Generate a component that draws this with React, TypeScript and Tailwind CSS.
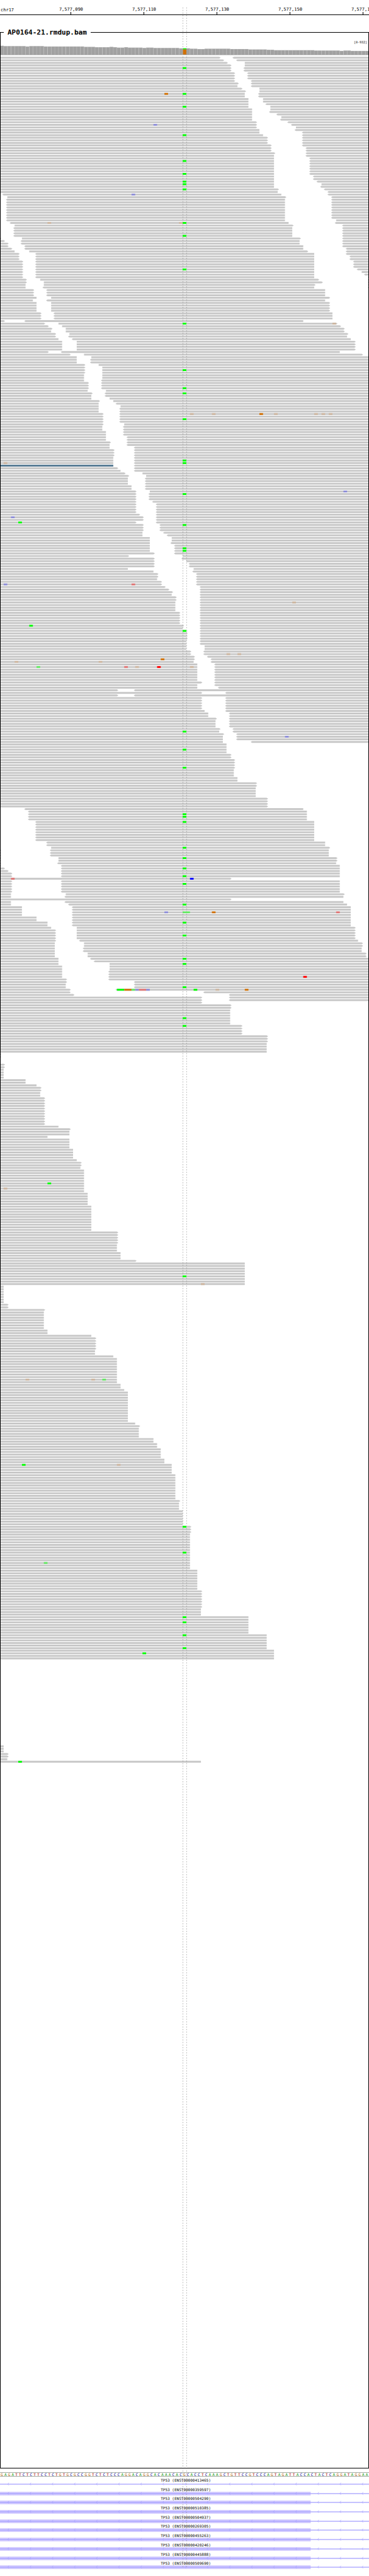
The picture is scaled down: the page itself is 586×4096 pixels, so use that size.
import React from "react";

const BASES = 101;
const BASE_W = 1000 / BASES;
const ROW_TOP = 154;
const ROW_PITCH = 7;
const ROW_H = 5;
const LOCUS = 50;
const LAST_ROW = 661;

// Each entry is "first row: reads". A read is start-end in bases, and > or < marks
// an end that carries the strand arrow. The reads hold until the next entry.
const LAYOUT = `
0: -60> <64-;1: -61> <65-;2: -62> 67-;3: -63> 67-;4: -63> <67-;6: -64> <68-;9: -64> <69-;10: -65> <69-;11: -65 <69-;
12: -66> 71-;13: -67> 71-;14: -67 <71-;16: -68 72-;18: -68 <73-;19: -68 74-;20: -69 74-;21: -69 <74-;22: -69 <76-;
23: -69 77-;24: -69 <77-;25: -70> <79-;26: -70> <80-;27: -70> 81-;28: -71 <81-;29: -71 <83-;30: -72 <83-;31: -73> <83-;
34: -74> <83-;35: -74> <84-;37: -75> <84-;38: -75 <84-;39: -75 <85-;46: -75 <86-;48: -75 <87-;49: -75 88-;50: -75 <88-;
51: -76> <89-;52: -76 <90-;53: <1-77 <90-;54: 2-78> <91-;55: <2-78 <91-;63: <2-78 92-;64: <3-79 <92-;65: 4-80> <94-;
66: <4-80 <94-;70: -0> 6-82> <94-;71: -1> <6-82 <94-;72: -2> <6-82 <94-;73: -2> <7-83 <94-;74: -3> <7-83 <95-;
75: -4 8-84> <95-;76: -5> <10-86 <95-;77: -5> <10-86 <96-;79: -6> <10-86 <97-;82: -6> <10-86 <98-;83: -6> <10-86 99-;
84: -6> <10-86 <100-;85: -6> <10-86 <101-;86: -7> 11-87> <101-;87: -7> 12-88> <101-;88: -7 12-86> <101-;
89: -7 <12-86 <101-;90: -9> <13-89;93: -10 14-90>;94: -9 <13-89;95: -10 14-90>;99: -11> <15-91;102: -1> <7-83;
103: -12> 16-92>;104: -13> 17-93>;105: -14> 18-94>;106: -14 18-94>;107: -15> 19-95>;108: -15> <19-95;109: -16 <20-96;
110: -17 21-97>;114: -13> <17-93;115: -19> 23-99>;116: -21 25-;117: -21 <25-;119: -23> 27-;120: -23> 28-;123: -23 28-;
125: -23 <28-;126: -24> <28-;129: -24 29-;130: -25> <29-;131: -25 <29-;132: -25 30-;133: -27> 31-;134: -27 <32-;
135: -27 33-;136: -27 <33-;138: -28> <33-;142: -28> 34-;143: -28 <34-;145: -29 <34-;147: -29 <35-;149: -30> <35-;
150: -30 <35-;151: -30 <37-;152: -31> <37-;155: -31 <37-;159: -32> <37-;160: -33 <37-;161: -34> 39-;162: -35> 40-;
163: -35 <40-;166: -36 <40-;168: -37> 41-;169: -37> <41-;172: -37> <42-;173: -37> <43-;177: -38> <43-;178: -39> <43-;
180: -37> <43-;181: -39> <44-;184: -39 <45-;185: -39 <46-;186: -41 47-;188: -41 <47-;189: -41 <48-;192: -42> <48-;
193: -35> 50-;194: -42> <50-;195: -42> 51-;196: -42> <52-;198: -35 53-;199: -42 <53-;200: -43> <54-;202: -43 <54-;
203: -44> <54-;205: -45> <55-;206: -46> <55-;207: -47> <55-;208: -47 <55-;209: -48> <55-;211: -48 <55-;215: -49> <55-;
220: -50> <55-;221: -50 <55-;222: -51> <55-;226: -51 <55-;228: -51 56-;230: -52> <56-;232: -53> <57-;233: -53> <58-;
234: -53 <58-;235: -54 <59-;242: -55> <59-;243: -54 <59-;244: -54 <60-;245: -32> <37-;246: -55> <62-;247: -32> <37-;
248: -55> <62-;253: -56 <62-;254: -57 <63-;256: -59> <63-;257: -59 <63-;260: -60> <64-;261: -60 <64-;262: -61> <65-;
263: -61 <65-;265: -61 <69-;266: -62;270: -63>;272: -64>;276: -64;279: -65;281: -70>;283: -70;287: -73>;291: <7-83;
292: <8-84;296: <10-86;304: <13-89;306: 14-90>;307: -0> <14-90;310: -0> 16-92>;312: -0> <16-92;313: -0> <17-93;
314: -1> <17-93;315: -2> <17-93;316: -3> <17-93;318: -63>;319: -3> <17-93;324: -3 18-94>;325: -3 <18-94;326: -63>;
327: -3 <18-94;328: -3 <19-95;329: -6 <20-96;333: -10 <20-96;335: -13 <20-96;337: -14 21-97>;338: -15> 21-97>;
342: -15> <22-98;343: -15 23-99>;345: -15 <23-99;347: -15 24-100>;349: -16 <25-;350: -16 <26-;351: -16 30-;
352: -17 30-;354: -17 <30-;357: -18> <30-;358: -18> <37-;359: -18 <37-;361: -19> <32-;362: -19> <56-;363: -20> <63-;
364: -55> <63-;366: -55>;367: -63>;369: -63;375: -66>;379: -73>;382: -73;386: -0>;388:;390: -1>;392: -1;396: -7;
398: -10;399: -11>;401: -11;403: -12>;414: -16;415: -19>;416: -19;418: -13;419: -19;423: -20;427: -21;428: -22>;
430: -22;431: -23;440: -24;445: -25;455: -32>;460: -32;463: -33;466: -37>;467: -67;476: -1;483: -2>;485: -12>;
486: -12;493: -13;495: -25;496: -26>;501: -26;503: -31;504: -32;514: -33;516: -34;517: -35;529: -37;530: -38>;
531: -38;535: -42;537: -43;539: -44;543: -45;545: -47;549: -48;559: -49>;560: -49;563: -50;569: -52>;572: -52;
586: -54;594: -55>;601: -55;604: -68;611: -73;617: -75;621:;654: -1;657: -2>;659: -2;660: -55;661:`;

const LOCUS_ROWS = [
  4, 14, 19, 30, 40, 45, 48, 49, 51, 64, 69, 82, 103, 121, 128, 130, 140, 156, 157, 169, 181, 190, 191, 222, 261, 268,
  275, 293, 294, 296, 306, 310, 314, 317, 320, 328, 335, 340, 349, 351, 360, 372, 375, 472, 569, 579, 604, 606, 611, 616,
];

const GREEN = "#00ff00";
const ORANGE = "#d17105";
const BLUE = "#0000ff";
const RED = "#ff0000";
const PALE_GREEN = "#64e864";
const PALE_BLUE = "#8f8fd9";
const PALE_RED = "#e07676";
const TAN = "#cdb6a0";
const STEEL = "#577b94";

type Mark = [row: number, base: number, color: string, length?: number];

const MARKS: Mark[] = [
  ...LOCUS_ROWS.map((row): Mark => [row, LOCUS, GREEN]),
  [14, 45, ORANGE], [26, 42, PALE_BLUE], [53, 36, PALE_BLUE], [64, 13, TAN], [64, 49, TAN], [103, 91, TAN],
  [138, 52, TAN], [138, 58, TAN], [138, 71, ORANGE], [138, 75, TAN], [138, 86, TAN], [138, 88, TAN], [138, 90, TAN],
  [157, 1, TAN], [158, 0, STEEL, 31], [168, 94, PALE_BLUE], [178, 3, PALE_BLUE], [180, 5, GREEN],
  [204, 1, PALE_BLUE], [204, 36, PALE_RED], [211, 80, TAN], [220, 8, GREEN], [231, 62, TAN], [231, 65, TAN],
  [233, 44, ORANGE], [234, 4, TAN], [234, 27, TAN], [236, 10, PALE_GREEN], [236, 34, PALE_RED], [236, 37, TAN],
  [236, 43, RED], [236, 52, TAN], [263, 78, PALE_BLUE], [318, 3, PALE_RED], [318, 52, BLUE], [331, 45, PALE_BLUE],
  [331, 50, PALE_GREEN, 2], [331, 58, ORANGE], [331, 92, PALE_RED], [356, 83, RED], [361, 32, GREEN, 2],
  [361, 34, ORANGE, 2], [361, 36, PALE_GREEN], [361, 37, PALE_BLUE], [361, 38, PALE_RED, 2], [361, 40, PALE_BLUE],
  [361, 53, GREEN], [361, 59, TAN], [361, 67, ORANGE], [436, 13, GREEN], [438, 1, TAN], [475, 55, TAN],
  [512, 7, TAN], [512, 25, TAN], [512, 28, PALE_GREEN], [545, 6, GREEN], [545, 32, TAN], [583, 12, PALE_GREEN],
  [618, 39, GREEN], [660, 5, GREEN],
];

// [first base, top of the bar]
const COVERAGE: [number, number][] = [
  [0, 124], [1, 125], [7, 126], [8, 125], [12, 126], [23, 127], [26, 128], [30, 127], [31, 128], [32, 129], [34, 128],
  [35, 129], [39, 130], [40, 129], [42, 130], [49, 131], [52, 132], [54, 133], [56, 132], [63, 133], [68, 134],
  [73, 135], [75, 136], [86, 137], [93, 138], [94, 137], [96, 138],
];

const SEQUENCE =
  "GAGATTCTCTTCCTCTGTGCGCCGGTCTCTCCCAGGACAGGCACAAACACGCACCTCAAAGCTGTTCCGTCCCAGTAGATTACCACTACTCAGGATAGGAA";

const BASE_COLOR: Record<string, string> = {
  A: "text-[#009600]",
  C: "text-[#000096]",
  G: "text-[#b86a10]",
  T: "text-[#b00000]",
};

const TICKS = ["7,577,090", "7,577,110", "7,577,130", "7,577,150", "7,577,170"];

const TRANSCRIPTS = [
  "ENST00000413465", "ENST00000359597", "ENST00000504290", "ENST00000510385", "ENST00000504937",
  "ENST00000269305", "ENST00000455263", "ENST00000420246", "ENST00000445888", "ENST00000509690",
];

const READS_PATH = (() => {
  const groups = LAYOUT.trim().split(";").map((entry) => {
    const [row, reads] = entry.split(":");
    return { row: Number(row), reads: reads.trim().split(" ").filter(Boolean) };
  });
  const parts: string[] = [];
  groups.forEach((group, i) => {
    const end = i + 1 < groups.length ? groups[i + 1].row : LAST_ROW;
    for (let row = group.row; row < end; row++) {
      const y = ROW_TOP + row * ROW_PITCH;
      for (const read of group.reads) {
        const m = /^(<?)(\d*)-(\d*)(>?)$/.exec(read);
        if (!m) continue;
        const x0 = (m[2] === "" ? 0 : Number(m[2])) * BASE_W;
        const x1 = (m[3] === "" ? BASES : Number(m[3])) * BASE_W;
        const left = m[1] ? `L${x0 - 4} ${y + 2.5}` : "";
        const right = m[4] ? `L${x1 + 4} ${y + 2.5}` : "";
        parts.push(`M${x0} ${y}H${x1}${right}L${x1} ${y + ROW_H}H${x0}${left}Z`);
      }
    }
  });
  return parts.join("");
})();

const GUIDES_PATH = (() => {
  const covered = new Set([...LOCUS_ROWS, 331]);
  const parts: string[] = [];
  for (let y = 20, row = -19; y < 6960; y += ROW_PITCH, row++) {
    if (y > 129 && y < 148) {
      parts.push(`M504.8 ${y}h1v3h-1Z`);
      continue;
    }
    const h = covered.has(row) ? 1 : 3;
    parts.push(`M495 ${y}h1v${h}h-1ZM505 ${y}h1v${h}h-1Z`);
  }
  return parts.join("");
})();

function coverageTop(base: number) {
  let top = COVERAGE[0][1];
  for (const [first, value] of COVERAGE) if (first <= base) top = value;
  return top;
}

function Ruler() {
  return (
    <header className="flex overflow-hidden border-b border-black pt-[13px] text-[7px] leading-[7px]">
      <div className="w-[9.36%] shrink-0 whitespace-nowrap pl-px">chr17</div>
      {TICKS.map((tick) => (
        <div key={tick} className="flex w-[19.8%] shrink-0 flex-col items-center">
          <span className="-mt-px">{tick}</span>
          <span className="h-1 w-px bg-black" />
        </div>
      ))}
    </header>
  );
}

function Coverage() {
  return (
    <g>
      {Array.from({ length: BASES }, (_, base) => {
        const top = coverageTop(base);
        const x = base * BASE_W;
        return (
          <g key={base}>
            <rect x={x} y={top} width={BASE_W + 0.1} height={148 - top} fill="#afafaf" />
            <rect x={x + 1} y={top + 1} width={8.2} height={147 - top} fill="#a1a1a1" />
          </g>
        );
      })}
      <rect x={495.8} y={131} width={9.4} height={3} fill={GREEN} />
      <rect x={495.8} y={134} width={9.4} height={14} fill={ORANGE} />
      <rect x={0} y={148} width={1000} height={1} fill="#777777" />
    </g>
  );
}

function AlignmentTrack() {
  return (
    <fieldset className="border border-black">
      <legend className="ml-[5px] px-1.5 text-[11px] font-bold leading-[13px]">AP0164-21.rmdup.bam</legend>
      <p className="pr-0.5 pt-[6px] text-right text-[5px] leading-[6px]">[0-932]</p>
      <svg
        className="block aspect-[584/3854] w-full"
        viewBox="1.7 119.4 996.6 6571.4"
        preserveAspectRatio="none"
        role="img"
        aria-label="Coverage and aligned reads"
      >
        <Coverage />
        <path d={READS_PATH} fill="#c8c8c8" />
        {MARKS.map(([row, base, color, length = 1]) => (
          <rect
            key={`${row}-${base}`}
            x={base * BASE_W}
            y={ROW_TOP + row * ROW_PITCH}
            width={length * BASE_W}
            height={ROW_H}
            fill={color}
          />
        ))}
      </svg>
    </fieldset>
  );
}

function SequenceTrack() {
  return (
    <div className="mt-1.5 flex border-y border-[#a4aca4] text-[6px] leading-[5px]">
      {SEQUENCE.split("").map((base, i) => (
        <span key={i} className={`flex min-w-0 flex-1 justify-center ${BASE_COLOR[base]}`}>
          {base}
        </span>
      ))}
    </div>
  );
}

function TranscriptGlyph({ exon }: { exon: boolean }) {
  const arrows = Array.from({ length: 17 }, (_, i) => 23 + i * 60);
  return (
    <svg className="block h-1.5 w-full" viewBox="0 0 1000 10" preserveAspectRatio="none" aria-hidden="true">
      {exon && <rect width={842} height={10} fill="#d3ccff" />}
      <rect y={4} width={1000} height={2} fill="#9f9aff" />
      <path
        d={arrows.map((x) => `M${x + 1} 1L${x - 2} 5L${x + 1} 8`).join("")}
        fill="none"
        stroke="#9f9aff"
        strokeWidth={1}
      />
    </svg>
  );
}

function TranscriptTrack() {
  return (
    <ul className="mt-0.5 grid h-[147px] auto-rows-fr">
      {TRANSCRIPTS.map((id, i) => (
        <li key={id} className="pt-px">
          <p className="pl-1 text-center text-[6px] leading-[6px]">TP53 ({id})</p>
          <TranscriptGlyph exon={i > 0} />
        </li>
      ))}
    </ul>
  );
}

export default function App() {
  return (
    <main className="relative w-full overflow-hidden bg-white pb-[9px] font-['DejaVu_Sans_Mono',monospace] text-black">
      <Ruler />
      <div className="pt-[21px]">
        <AlignmentTrack />
      </div>
      <SequenceTrack />
      <TranscriptTrack />
      <svg
        className="pointer-events-none absolute inset-0 h-full w-full"
        viewBox="0 0 1000 6984"
        preserveAspectRatio="none"
        aria-hidden="true"
      >
        <path d={GUIDES_PATH} fill="#888888" />
      </svg>
    </main>
  );
}
